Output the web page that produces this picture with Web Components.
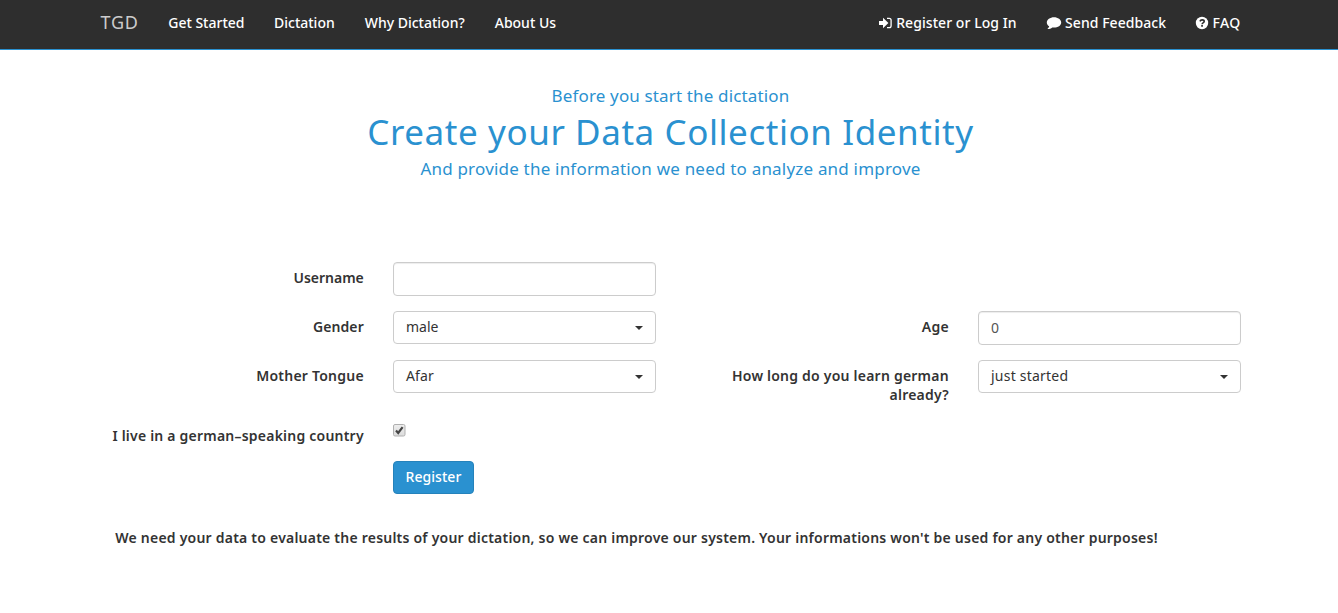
<!DOCTYPE html>
<html lang="en">
<head>
<meta charset="utf-8">
<title>TGD</title>
<style>
html, body { margin: 0; background: #fff; }
body { font: 14px/19px "Noto Sans", "Open Sans", sans-serif; color: #333; overflow: hidden; }
</style>
</head>
<body>
<tgd-page></tgd-page>
<script>
const define = (name, html, setup) => {
  const template = document.createElement('template');
  template.innerHTML = html;
  customElements.define(name, class extends HTMLElement {
    constructor() {
      super();
      this.attachShadow({ mode: 'open' }).append(template.content.cloneNode(true));
    }
    connectedCallback() { if (setup) setup(this); }
  });
};

const icons = {
  login: ['12.5', '0 0 12.5 12', '<path d="M0 4h4V.8L9.400 6 4 11.200V8H0z"/><path d="M8 1.400h2.200a1.900 1.900 0 0 1 1.900 1.900v5.400a1.900 1.900 0 0 1-1.900 1.900H8" fill="none" stroke="#fff" stroke-width="1.300"/>'],
  comment: ['14', '0 0 14 12', '<path d="M7 .2c3.900 0 7.200 2.300 7.200 5.200s-3.300 5.200-7.200 5.200c-.6 0-1.200-.05-1.700-.15C4 11.500 2.500 12 .9 12.100c-.4 0-.5-.4-.2-.6.8-.7 1.200-1.200 1.500-2.200C.9 8.400-.2 7.100-.2 5.400-.2 2.500 3.100.2 7 .2z"/>'],
  question: ['12', '0 0 12 12', '<circle cx="6" cy="6" r="6.200"/><path d="M3.900 4.300C4.400 3.300 5.100 2.900 6.100 2.900c1.200 0 2.100.6 2.100 1.600 0 1.400-2.100 1.400-2.100 2.700" fill="none" stroke="#2e2e2e" stroke-width="1.600"/><path d="M5.200 8.100h1.700v1.700H5.200z" fill="#2e2e2e"/>']
};

define('tgd-link', `
<style>
:host { display: flex; align-items: center; padding: 0 15px; color: #fff; font-weight: 500; line-height: 19px; white-space: nowrap; }
:host([brand]) { color: #ccc; font-size: 18px; font-weight: 400; letter-spacing: .8px; }
svg { display: block; fill: #fff; height: 12px; margin-right: 4.500px; overflow: visible; }
</style><slot></slot>`, el => {
  const icon = icons[el.getAttribute('icon')];
  if (icon) el.shadowRoot.querySelector('slot').insertAdjacentHTML('beforebegin',
    `<svg width="${icon[0]}" height="12" viewBox="${icon[1]}">${icon[2]}</svg>`);
});

define('tgd-navbar', `
<style>
:host { display: block; height: 49px; background: #2e2e2e; border-bottom: 1px solid #2a91d0; }
nav { display: flex; justify-content: space-between; width: 1170px; height: 45px; margin-left: 85.5px; }
div { display: flex; }
</style>
<nav><div><slot></slot></div><div><slot name="right"></slot></div></nav>`);

define('tgd-heading', `
<style>
:host { display: block; text-align: center; color: #2a91d0; font-size: 17px; line-height: 20px; }
h1 { margin: 0 0 1px; font-size: 35px; font-weight: 400; line-height: 52px; letter-spacing: .57px; }
.top { letter-spacing: .15px; }
.bottom { letter-spacing: .2px; }
</style>
<div class="top"><slot name="top"></slot></div><h1><slot></slot></h1><div class="bottom"><slot name="bottom"></slot></div>`);

define('tgd-label', `
<style>
:host { display: block; box-sizing: border-box; padding: 5.5px 14.2px 0 15px; text-align: right; font-weight: 600; letter-spacing: var(--track, .22px); }
</style><slot></slot>`);

define('tgd-input', `
<style>
:host { display: block; padding: 0 15px; }
input { display: block; box-sizing: border-box; width: 100%; height: 34px; margin: 0; padding: 5px 12px 7px; border: 1px solid #ccc; border-radius: 4px; background: #fff; box-shadow: inset 0 1px 1px rgba(0,0,0,.075); color: #555; font: inherit; outline: 0; }
</style><input type="text">`, el => { el.shadowRoot.querySelector('input').value = el.getAttribute('value') || ''; });

define('tgd-select', `
<style>
:host { display: block; padding: 0 15px; }
button { display: flex; align-items: center; justify-content: space-between; box-sizing: border-box; width: 100%; height: 33px; margin: 0; padding: 0 12px 2px; border: 1px solid #ccc; border-radius: 4px; background: #fff; color: #333; font: inherit; letter-spacing: var(--track, 0); }
i { border: 4px solid transparent; border-top-color: #333; border-bottom: 0; margin-top: 2px; }
</style><button type="button"><slot></slot><i></i></button>`);

define('tgd-checkbox', `
<style>
:host { display: block; padding: 0 15px; }
svg { display: block; margin: 4px 0 0 -.5px; }
</style>
<svg width="13" height="13" viewBox="0 0 13 13" role="checkbox" aria-checked="true">
<defs><linearGradient id="g" x2="0" y2="1"><stop stop-color="#eee"/><stop offset="1" stop-color="#dcdcdc"/></linearGradient></defs>
<rect x=".5" y=".5" width="11.500" height="11.500" rx="1.500" fill="url(#g)" stroke="#b0b0b0"/>
<path d="M3 6.600l2.200 2.400L9.600 3.200" fill="none" stroke="#444" stroke-width="2.200"/></svg>`);

define('tgd-button', `
<style>
:host { display: block; padding: 0 15px; }
button { box-sizing: border-box; width: 81px; height: 33px; margin: 0; padding: 0 0 2px; border: 1px solid #2582bb; border-radius: 4px; background: #2a91d0; color: #fff; font: inherit; font-weight: 500; line-height: 29px; letter-spacing: .05px; display: block; }
</style><button type="button"><slot></slot></button>`);

define('tgd-form', `
<style>
:host { display: grid; grid-template-columns: repeat(4, 292.5px); grid-template-rows: 49px 49px 60px 41px 33px; margin-left: 85.5px; align-items: start; }
</style><slot></slot>`);

define('tgd-page', `
<style>
:host { display: block; width: 1341px; }
tgd-heading { margin-top: 35.5px; }
tgd-form { margin-top: 83.5px; }
.c1 { grid-column: 1; }
.c2 { grid-column: 2; }
p { margin: 34px 0 0 115.3px; font-weight: 600; letter-spacing: .224px; white-space: nowrap; }
</style>
<tgd-navbar>
<tgd-link brand>TGD</tgd-link><tgd-link style="margin-left:-.6px">Get Started</tgd-link><tgd-link style="margin-left:-.5px">Dictation</tgd-link><tgd-link>Why Dictation?</tgd-link><tgd-link>About Us</tgd-link>
<tgd-link slot="right" icon="login" style="letter-spacing:.06px">Register or Log In</tgd-link><tgd-link slot="right" icon="comment" style="letter-spacing:.05px">Send Feedback</tgd-link><tgd-link slot="right" icon="question" style="letter-spacing:.3px">FAQ</tgd-link>
</tgd-navbar>
<tgd-heading><span slot="top">Before you start the dictation</span>Create your Data Collection Identity<span slot="bottom">And provide the information we need to analyze and improve</span></tgd-heading>
<tgd-form>
<tgd-label class="c1" style="--track:0">Username</tgd-label><tgd-input class="c2"></tgd-input>
<tgd-label class="c1" style="--track:.1px">Gender</tgd-label><tgd-select>male</tgd-select><tgd-label>Age</tgd-label><tgd-input value="0"></tgd-input>
<tgd-label class="c1" style="--track:.23px">Mother Tongue</tgd-label><tgd-select style="--track:.1px">Afar</tgd-select><tgd-label>How long do you learn german already?</tgd-label><tgd-select style="--track:.22px">just started</tgd-select>
<tgd-label class="c1">I live in a german–speaking country</tgd-label><tgd-checkbox></tgd-checkbox>
<tgd-button class="c2">Register</tgd-button>
</tgd-form>
<p>We need your data to evaluate the results of your dictation, so we can improve our system. Your informations won't be used for any other purposes!</p>`);
</script>
</body>
</html>
